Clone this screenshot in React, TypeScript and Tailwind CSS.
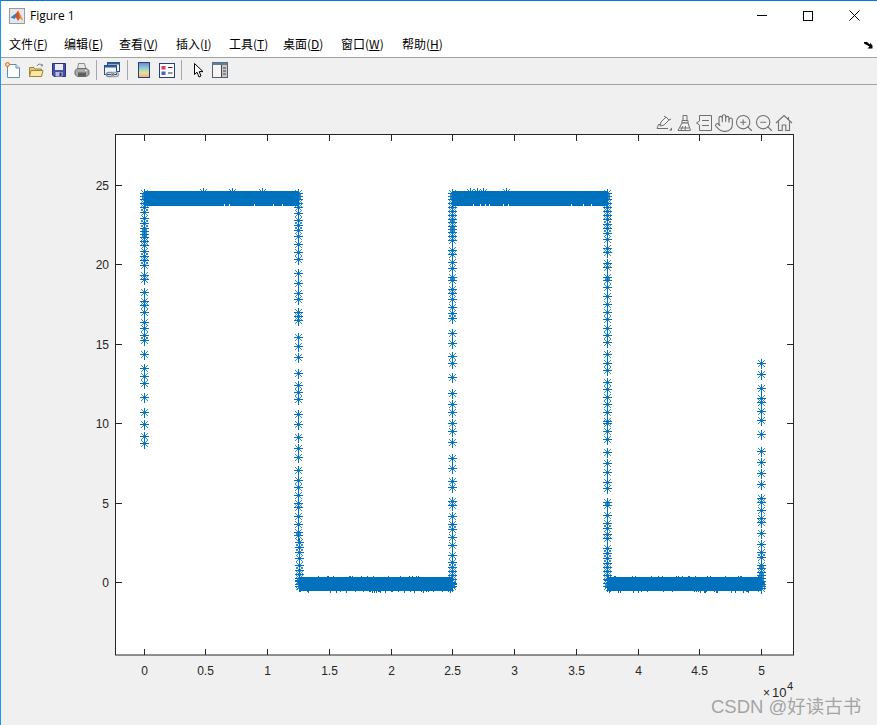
import { Hand, ZoomIn, ZoomOut } from 'lucide-react';

const BLUE = '#0072BD';

// marker rows read off the reference, as pixel y for each vertical run
const COL_1 = [
  193, 196, 199, 203, 207, 212, 218, 223, 228, 231, 234, 237, 241, 245, 251, 256, 260, 265, 275, 279, 292, 301, 305,
  312, 322, 328, 335, 340, 354, 368, 376, 383, 397, 412, 424, 436, 443,
];
const COL_2 = [
  193, 196, 199, 203, 207, 213, 220, 225, 230, 236, 244, 252, 259, 273, 283, 293, 299, 312, 316, 320, 337, 346, 357,
  373, 385, 392, 399, 414, 424, 437, 448, 457, 470, 480, 487, 495, 503, 507, 516, 524, 532, 535,
];
const COL_2_LOW = [542, 547, 552, 558, 565, 570, 574, 578, 581, 584, 586];
const COL_3 = [
  193, 196, 199, 203, 207, 211, 215, 219, 222, 226, 229, 232, 236, 240, 250, 254, 262, 268, 277, 280, 289, 293, 299,
  307, 313, 318, 333, 343, 356, 363, 377, 393, 404, 412, 423, 431, 442, 458, 468, 481, 487, 501, 505, 516, 524, 529,
  537, 545, 555, 562, 567, 571, 575, 579, 583, 586,
];
const COL_4 = [
  193, 196, 199, 203, 207, 211, 215, 219, 224, 228, 233, 239, 248, 252, 263, 267, 277, 280, 287, 296, 304, 312, 319,
  328, 335, 342, 354, 363, 370, 382, 389, 397, 404, 412, 421, 423, 431, 439, 452, 463, 472, 482, 488, 502, 505, 515,
  523, 528, 534, 538, 548, 553, 558, 563, 567, 571, 575, 579, 583, 586,
];
const COL_5 = [
  363, 374, 388, 398, 402, 411, 420, 434, 451, 462, 473, 484, 498, 502, 510, 518, 522, 533, 544, 552, 557, 565, 568,
  572, 575, 578, 581, 584, 586, 588,
];

function seeded(seed: number) {
  let s = seed;
  return () => {
    s = (s * 16807) % 2147483647;
    return (s - 1) / 2147483646;
  };
}

type Pt = [number, number];

function bandMarkers(from: number, to: number, seed: number): Pt[] {
  const rnd = seeded(seed);
  const out: Pt[] = [];
  for (let x = from; x <= to; x += 1.2) {
    out.push([Math.floor(x) + 0.5, Math.floor(580 + rnd() * 8) + 0.5]);
  }
  return out;
}

const column = (x: number, ys: number[]): Pt[] => ys.map((y) => [x, y + 0.5] as Pt);

const markers: Pt[] = [
  ...column(144.5, COL_1),
  ...column(298.5, COL_2),
  ...column(299.5, COL_2_LOW),
  ...column(452.5, COL_3),
  ...column(607.5, COL_4),
  ...column(761.5, COL_5),
  [203.5, 192.5],
  [232.5, 192.5],
  [262.5, 192.5],
  [470.5, 192.5],
  [477.5, 192.5],
  [483.5, 192.5],
  [506.5, 192.5],
  ...bandMarkers(299, 453, 97),
  ...bandMarkers(608, 761, 4211),
];

const crossPath = markers.map(([x, y]) => `M${x - 4.5} ${y}H${x + 4.5}M${x} ${y - 5}V${y + 5}`).join('');

const X_TICKS = ['0', '0.5', '1', '1.5', '2', '2.5', '3', '3.5', '4', '4.5', '5'];
const Y_TICKS = [0, 5, 10, 15, 20, 25];
const xPos = (i: number) => Math.round(143.5 + i * 61.75) + 0.5;
const yPos = (v: number) => Math.round(583 - v * 15.88) - 0.5;

const MENUS = [
  ['文件', 'F', 'w-[55px]'],
  ['编辑', 'E', 'w-[55px]'],
  ['查看', 'V', 'w-[57px]'],
  ['插入', 'I', 'w-[53px]'],
  ['工具', 'T', 'w-[54px]'],
  ['桌面', 'D', 'w-[58px]'],
  ['窗口', 'W', 'w-[61px]'],
  ['帮助', 'H', 'w-[50px]'],
];

function MatlabIcon() {
  return (
    <svg width="16" height="16" viewBox="0 0 16 16">
      <rect x="0.5" y="0.5" width="15" height="15" fill="#e4e8ee" stroke="#9a9a9a" />
      <path d="M1.5 9.5 5 7l2-1.5 L9 2.5 11 6l3 6.5-3-2.5-2 3-2-3.5L4.5 8z" fill="#d9531e" />
      <path d="M1.5 9.5 5 7l2-1.5L8 8 5.5 11z" fill="#3d7fb8" />
      <path d="M9 2.5 11 6l3 6.5-3-2.5z" fill="#f0932b" />
    </svg>
  );
}

function NewIcon() {
  return (
    <svg width="16" height="16" viewBox="0 0 16 16">
      <path d="M2.5 2.5H11L14.5 6V15.5H2.5Z" fill="#fff" stroke="#5f8fb4" />
      <path d="M11 2.5V6H14.5" fill="#dcebf5" stroke="#5f8fb4" />
      <circle cx="2.5" cy="2.5" r="2" fill="#f6d48a" stroke="#dd6b2a" />
    </svg>
  );
}

function OpenIcon() {
  return (
    <svg width="16" height="16" viewBox="0 0 16 16">
      <path d="M1.5 5.5H6L7 7H13.5V14.5H1.5Z" fill="#e9c766" stroke="#a08436" />
      <path d="M1.5 14.5 3 8.5H15L13.5 14.5Z" fill="#f9e7a6" stroke="#a08436" />
      <path d="M9 4C10 1.8 12.5 1.5 14 3.2" fill="none" stroke="#6f7f8c" />
      <path d="M14.8 1.8V4.2H12.4Z" fill="#6f7f8c" />
    </svg>
  );
}

function SaveIcon() {
  return (
    <svg width="16" height="16" viewBox="0 0 16 16">
      <path d="M1.5 1.5H14.5V14.5H3L1.5 13Z" fill="#4a52a8" stroke="#2c3278" />
      <rect x="4" y="2" width="8" height="6" fill="#e8ecf6" />
      <rect x="4.5" y="10" width="7" height="4.5" fill="#b9bfd8" />
      <rect x="8.5" y="10.5" width="2" height="3.5" fill="#2c3278" />
    </svg>
  );
}

function PrintIcon() {
  return (
    <svg width="16" height="16" viewBox="0 0 16 16">
      <path d="M4.5 1.5H10.5L12 7H3.5Z" fill="#e8e8e8" stroke="#8b8b8b" />
      <path d="M1 8.5 3.5 6.5H12.5L15 8.5V12.5L12.5 14.5H3.5L1 12.5Z" fill="#a9a9a9" stroke="#6c6c6c" />
      <rect x="4" y="10.5" width="8" height="3.5" fill="#5f5f5f" />
      <rect x="11" y="8" width="2" height="1" fill="#e7e7e7" />
    </svg>
  );
}

function LinkIcon() {
  return (
    <svg width="16" height="16" viewBox="0 0 16 16">
      <rect x="3.5" y="0.5" width="12" height="9" fill="#f0f4fa" stroke="#2d4f80" />
      <rect x="3.5" y="0.5" width="12" height="2" fill="#2d5d99" />
      <rect x="0.5" y="3.5" width="12" height="9" fill="#f0f4fa" stroke="#2d4f80" />
      <rect x="0.5" y="3.5" width="12" height="2" fill="#2d5d99" />
      <rect x="2.5" y="10.5" width="7" height="4" rx="2" fill="none" stroke="#7d8c99" strokeWidth="1.4" />
      <rect x="7.5" y="10.5" width="7" height="4" rx="2" fill="none" stroke="#99a6b0" strokeWidth="1.4" />
    </svg>
  );
}

function ColorbarIcon() {
  return (
    <svg width="12" height="16" viewBox="0 0 12 16">
      <defs>
        <linearGradient id="cbar" x1="0" y1="0" x2="0" y2="1">
          <stop offset="0" stopColor="#6f83cf" />
          <stop offset="0.4" stopColor="#8fd2d4" />
          <stop offset="0.7" stopColor="#f0e08c" />
          <stop offset="1" stopColor="#efa58f" />
        </linearGradient>
      </defs>
      <rect x="0.5" y="0.5" width="11" height="15" fill="url(#cbar)" stroke="#27407a" />
    </svg>
  );
}

function LegendIcon() {
  return (
    <svg width="16" height="15" viewBox="0 0 16 15">
      <rect x="0.5" y="0.5" width="15" height="14" fill="#fbfbfd" stroke="#27407a" />
      <rect x="2.5" y="3" width="4" height="3.5" fill="#d9435e" />
      <rect x="2.5" y="8.5" width="4" height="3.5" fill="#4d5fd0" />
      <path d="M9 4.5H13.5M9 10H13.5" stroke="#333" />
    </svg>
  );
}

function CursorIcon() {
  return (
    <svg width="10" height="15" viewBox="0 0 10 15">
      <path d="M0.5 0.5V11.5L3 9.2 5 14 7 13 5.2 8.6H9Z" fill="#fff" stroke="#000" />
    </svg>
  );
}

function PlotToolsIcon() {
  return (
    <svg width="16" height="16" viewBox="0 0 16 16">
      <rect x="0.5" y="0.5" width="15" height="15" fill="#f6f6f6" stroke="#55606b" />
      <rect x="0.5" y="0.5" width="15" height="2.5" fill="#5f7f9f" />
      <rect x="9" y="3" width="6" height="12" fill="#c9c9c9" />
      <path d="M9.5 3V15M11 6H14M11 9H14M11 12H14" stroke="#444" />
    </svg>
  );
}

function PlotEditIcon() {
  return (
    <svg width="17" height="16" viewBox="0 0 17 16" fill="none" stroke="#707070">
      <path d="M1 13.5H12M1 13.5 2.5 9.5H5" />
      <path d="M4 11 5 7l5-5 3 3-5 5z" fill="#f4f4f4" />
      <path d="M10 2.5 8 1M13 5 15 4" />
      <path d="M13 15.5H16V12.5Z" fill="#707070" stroke="none" />
    </svg>
  );
}

function BrushIcon() {
  return (
    <svg width="15" height="16" viewBox="0 0 15 16" fill="none" stroke="#707070">
      <path d="M6 .5H10V5.5H6Z" />
      <path d="M5 5.5H11V8H5Z" />
      <path d="M5 8 1 15.5H13.5L11 8Z" fill="#f4f4f4" />
      <path d="M4 15 6 11M8 15 8.5 11M3 13H12" />
    </svg>
  );
}

function DataTipIcon() {
  return (
    <svg width="16" height="16" viewBox="0 0 16 16" fill="none" stroke="#707070">
      <path d="M3.5 .5H15.5V15.5H3.5V10L.5 8 3.5 6Z" />
      <path d="M6 5.5H13M6 10.5H13" />
    </svg>
  );
}

function HomeIcon() {
  return (
    <svg width="20" height="20" viewBox="0 0 20 20" fill="none" stroke="#707070" strokeWidth="1.1">
      <path d="M2 10 10 2.5 18 10" />
      <path d="M14.5 4V7" />
      <path d="M4.5 8.5V17.5H8.2V12H11.8V17.5H15.5V8.5" />
    </svg>
  );
}

export default function App() {
  return (
    <div className="w-[877px] h-[725px] flex flex-col overflow-hidden bg-white border-l border-t border-l-[#1a9ae6] border-t-[#0a78d2] font-['Noto_Sans','Noto_Sans_CJK_SC',sans-serif] text-black">
      <div className="h-[29px] flex items-center shrink-0">
        <div className="ml-2 mr-[5px] mt-[1px]">
          <MatlabIcon />
        </div>
        <span className="text-[12px] font-['Open_Sans',sans-serif]">Figure 1</span>
        <div className="ml-auto flex h-full">
          <div className="w-[46px] flex items-center justify-center">
            <div className="w-[10px] h-px bg-black" />
          </div>
          <div className="w-[46px] flex items-center justify-center">
            <div className="w-[10px] h-[10px] border border-black" />
          </div>
          <div className="w-[46px] flex items-center justify-center">
            <svg width="11" height="11" viewBox="0 0 11 11" stroke="#000" strokeWidth="1">
              <path d="M.5 .5 10.5 10.5M10.5 .5 .5 10.5" />
            </svg>
          </div>
        </div>
      </div>

      <div className="h-[27px] flex items-center shrink-0 pl-2">
        {MENUS.map(([label, key, width]) => (
          <span key={key} className={`${width} text-[12px] whitespace-nowrap font-['Noto_Sans_CJK_SC',sans-serif]`}>
            {label}(<span className="underline">{key}</span>)
          </span>
        ))}
        <svg className="ml-auto mr-[4px] mt-[3px]" width="9" height="7" viewBox="0 0 9 7">
          <path d="M0 0H3L6 2.5V0.8L8.5 3.5V6.5H3.5L5.5 4.6 0 1.5Z" fill="#000" />
        </svg>
      </div>

      <div className="h-[28px] shrink-0 flex items-center pb-[2px] bg-[#f0f0f0] border-y border-y-[#a3a3a3]">
        <div className="w-[23px] flex justify-center">
          <NewIcon />
        </div>
        <div className="w-[23px] flex justify-center">
          <OpenIcon />
        </div>
        <div className="w-[23px] flex justify-center">
          <SaveIcon />
        </div>
        <div className="w-[23px] flex justify-center">
          <PrintIcon />
        </div>
        <div className="w-px h-[20px] bg-[#a8a8a8] ml-[3px] mr-[3px]" />
        <div className="w-[23px] flex justify-center">
          <LinkIcon />
        </div>
        <div className="w-px h-[20px] bg-[#a8a8a8] ml-[4px] mr-[4px]" />
        <div className="w-[23px] flex justify-center">
          <ColorbarIcon />
        </div>
        <div className="w-[23px] flex justify-center">
          <LegendIcon />
        </div>
        <div className="w-px h-[20px] bg-[#a8a8a8] ml-[3px] mr-[5px]" />
        <div className="w-[23px] flex justify-center">
          <CursorIcon />
        </div>
        <div className="w-[20px] flex justify-center">
          <PlotToolsIcon />
        </div>
      </div>

      <div className="relative flex-1 bg-[#f0f0f0]">
        <svg
          className="block font-['Liberation_Sans',Arial,sans-serif]"
          width="876"
          height="640"
          viewBox="1 85 876 640"
        >
          <rect x="115.5" y="134.5" width="678" height="520.5" fill="#fff" stroke="#262626" />
          <g stroke="#262626" shapeRendering="crispEdges">
            {X_TICKS.map((_, i) => (
              <path key={i} d={`M${xPos(i)} 135V141M${xPos(i)} 655V649`} />
            ))}
            {Y_TICKS.map((v) => (
              <path key={v} d={`M116 ${yPos(v)}H122M793 ${yPos(v)}H787`} />
            ))}
          </g>

          <rect x="145" y="191" width="154" height="15" fill={BLUE} />
          <rect x="453" y="191" width="155" height="15" fill={BLUE} />
          <rect x="300" y="577" width="153" height="14" fill={BLUE} />
          <rect x="608" y="577" width="153" height="14" fill={BLUE} />

          <g stroke={BLUE} strokeWidth="1" opacity="0.8">
            {markers.map(([x, y], i) => (
              <path key={i} d={`M${x - 3.5} ${y - 3.5}L${x + 3.5} ${y + 3.5}M${x - 3.5} ${y + 3.5}L${x + 3.5} ${y - 3.5}`} />
            ))}
          </g>
          <path d={crossPath} stroke={BLUE} strokeWidth="1" fill="none" shapeRendering="crispEdges" />

          <g fill="#fff" shapeRendering="crispEdges">
            {[224, 229, 254, 273, 282, 473, 480, 485, 489, 503, 508, 571, 583, 591].map((x) => (
              <rect key={x} x={x} y="204" width="1" height="2" />
            ))}
          </g>

          <g className="text-[12px] fill-[#262626]">
            {X_TICKS.map((t, i) => (
              <text key={t} x={xPos(i)} y="675" textAnchor="middle">
                {t}
              </text>
            ))}
            {Y_TICKS.map((v) => (
              <text key={v} x="109" y={yPos(v) + 4.5} textAnchor="end">
                {v}
              </text>
            ))}
            <text x="763" y="697">
              ×
            </text>
            <text x="772" y="697" className="text-[13px]">
              10
            </text>
            <text x="787" y="690" className="text-[11px]">
              4
            </text>
          </g>
        </svg>

        <div className="absolute left-[655px] top-[28px] flex items-center gap-[2px] text-[#707070]">
          <div className="flex items-center gap-[4px]">
            <PlotEditIcon />
            <BrushIcon />
            <DataTipIcon />
          </div>
          <div className="flex items-center">
            <Hand size={20} strokeWidth={1.3} />
            <ZoomIn size={20} strokeWidth={1.3} />
            <ZoomOut size={20} strokeWidth={1.3} />
            <HomeIcon />
          </div>
        </div>

        <div className="absolute left-[710px] top-[612px] text-[18.5px] leading-[20px] whitespace-nowrap text-[#8f8f8f]/80 font-['Liberation_Sans','Noto_Sans_CJK_SC',sans-serif]">
          CSDN @好读古书
        </div>
      </div>
    </div>
  );
}
